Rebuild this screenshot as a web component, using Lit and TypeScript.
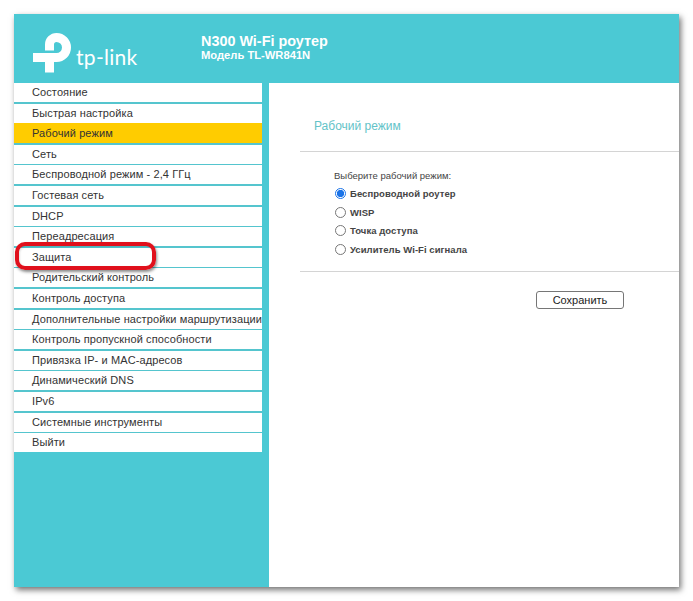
import { LitElement, html, css } from "lit";
import { customElement } from "lit/decorators.js";

const MENU = ["Состояние","Быстрая настройка","Рабочий режим","Сеть","Беспроводной режим - 2,4 ГГц","Гостевая сеть","DHCP","Переадресация","Защита","Родительский контроль","Контроль доступа","Дополнительные настройки маршрутизации","Контроль пропускной способности","Привязка IP- и MAC-адресов","Динамический DNS","IPv6","Системные инструменты","Выйти"];
const MODES = ["Беспроводной роутер","WISP","Точка доступа","Усилитель Wi-Fi сигнала"];

@customElement("app-root")
export class AppRoot extends LitElement {
  static styles = css`
    :host { display: block; width: 693px; height: 601px; background: #fff; font-family: "Liberation Sans", Arial, sans-serif; padding: 14px 14px 14px 14px; box-sizing: border-box; }
    .win { width: 665px; height: 573px; background: #4bc9d4; box-shadow: 2px 3px 6px rgba(0,0,0,.55); display: grid; grid-template-rows: 69px 1fr; grid-template-columns: 248px 7px 410px; position: relative; }
    .head { grid-column: 1 / -1; display: flex; align-items: flex-start; padding-left: 19px; color: #fff; }
    .logo { display: flex; align-items: flex-end; width: 168px; padding-top: 19px; height: 40px; }
    .logo svg { width: 39px; height: 40px; flex: none; }
    .logo span { font-family: Lato, "Open Sans", sans-serif; font-weight: 400; font-size: 21px; line-height: 24px; margin-left: 4px; margin-bottom: 4px; letter-spacing: .3px; }
    .titles { padding-top: 19px; font-weight: 700; }
    .t1 { font-size: 14.4px; line-height: 16px; }
    .t2 { font-size: 11.2px; line-height: 13px; }
    .menu { align-self: start; display: flex; flex-direction: column; background: #55c5ce; }
    .item { height: 19px; margin-bottom: 1.6px; box-sizing: border-box; background: #fff; padding-left: 18px; font-size: 11px; letter-spacing: .1px; line-height: 19px; color: #333; white-space: nowrap; overflow: hidden; flex: none; }
    .item:last-child { margin-bottom: 0; }
    .item.on { background: #ffcc00; height: 20.6px; margin-top: -1.6px; padding-top: 1.6px; }
    .main { grid-column: 3; background: #fff; padding-top: 35px; }
    h1 { margin: 0 0 0 45px; font-weight: 400; font-size: 12px; line-height: 16px; color: #63c3c8; }
    .rule { height: 1px; background: #d4d4d4; margin-left: 31px; }
    .r1 { margin-top: 17px; }
    .form { padding: 18px 0 0 65px; height: 119px; box-sizing: border-box; }
    .lead { font-size: 9.5px; line-height: 12px; color: #444; margin-bottom: 2px; }
    .mode { display: flex; align-items: center; height: 18.7px; gap: 4px; font-size: 9.5px; font-weight: 700; color: #444; letter-spacing: .05px; }
    .radio { width: 9px; height: 9px; border-radius: 50%; border: 1px solid #777; background: #fff; margin-left: 1px; box-sizing: content-box; flex: none; }
    .radio.on { border-color: #1a73e8; background: radial-gradient(circle, #1a73e8 0 3.4px, #fff 3.9px); }
    .btn { display: block; box-sizing: border-box; margin: 19px 0 0 267px; width: 88px; height: 18px; border: 1px solid #767676; border-radius: 3px; background: #fff; color: #222; text-align: center; font-size: 11px; line-height: 16px; }
    .mark { position: absolute; left: 1px; top: 228px; width: 141px; height: 28px; border: 4px solid #e0101c; border-radius: 10px; box-sizing: border-box; box-shadow: 1px 2px 3px rgba(0,0,0,.45), inset 1px 1px 2px rgba(0,0,0,.12); }
  `;

  render() {
    return html`<div class="win">
      <div class="head">
        <div class="logo">
          <svg viewBox="0 0 39 40" fill="none" stroke="#fff">
            <path d="M0 24.5 H16.5 V39.5" stroke-width="9" />
            <path d="M16.5 17.5 V11.5 A7 7 0 0 1 23.5 4.5 A10 10 0 0 1 33.5 14.5 A10 10 0 0 1 23.5 24.5 H21" stroke-width="9"/>
          </svg>
          <span>tp-link</span>
        </div>
        <div class="titles">
          <div class="t1">N300 Wi-Fi роутер</div>
          <div class="t2">Модель TL-WR841N</div>
        </div>
      </div>
      <div class="menu">
        ${MENU.map((m, i) => html`<div class="item ${i === 2 ? "on" : ""}">${m}</div>`)}
      </div>
      <div class="main">
        <h1>Рабочий режим</h1>
        <div class="rule r1"></div>
        <div class="form">
          <div class="lead">Выберите рабочий режим:</div>
          ${MODES.map((m, i) => html`<div class="mode"><span class="radio ${i === 0 ? "on" : ""}"></span>${m}</div>`)}
        </div>
        <div class="rule"></div>
        <div class="btn">Сохранить</div>
      </div>
      <div class="mark"></div>
    </div>`;
  }
}
